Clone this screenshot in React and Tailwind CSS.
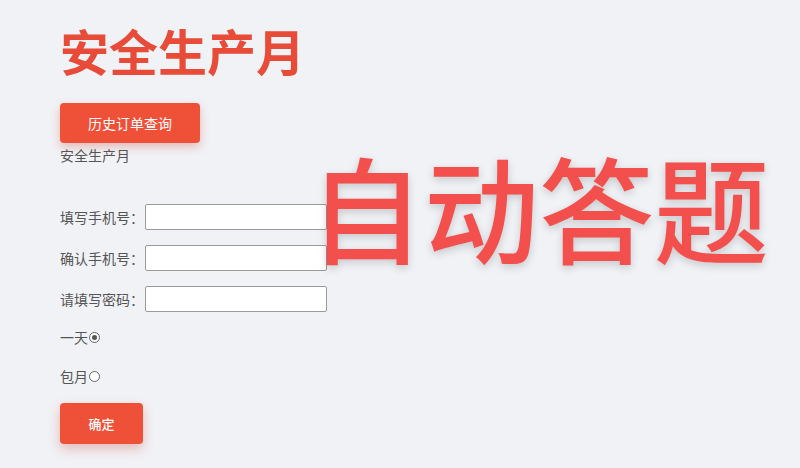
import React, { useState } from 'react';

const font = { fontFamily: '"Noto Sans CJK SC", "Noto Sans", sans-serif' };

const Field = ({ label }) => (
  <div className="flex items-center h-[26px]">
    <span className="w-[85px] text-[14px] text-[#555]">{label}</span>
    <input className="w-[182px] h-[26px] bg-white border border-[#9a9a9a] rounded-[2px] outline-none px-1 text-sm" />
  </div>
);

const Radio = ({ checked }) => (
  <span className="inline-flex items-center justify-center w-[11px] h-[11px] rounded-full border border-[#666] bg-white ml-[1px]">
    {checked && <span className="w-[5px] h-[5px] rounded-full bg-[#555]" />}
  </span>
);

const App = () => {
  const [plan, setPlan] = useState('day');

  return (
    <div className="relative w-[800px] h-[468px] bg-[#f1f2f6] overflow-hidden" style={font}>
      <div className="flex flex-col items-start pl-[60px] pt-[25px]">
        <h1 className="text-[49px] leading-none font-bold text-[#e84c39]">安全生产月</h1>

        <button className="mt-[29px] w-[140px] h-[40px] rounded-[4px] bg-[#ef5038] text-white text-[14px] shadow-[0_4px_10px_rgba(200,60,40,0.3)]">
          历史订单查询
        </button>
        <p className="text-[14px] leading-[20px] text-[#555] mt-[2px]">安全生产月</p>

        <div className="mt-[39px] flex flex-col gap-[15px]">
          <Field label="填写手机号：" />
          <Field label="确认手机号：" />
          <Field label="请填写密码：" />
        </div>

        <label className="mt-[15px] flex items-center h-[20px] text-[14px] text-[#555] cursor-pointer" onClick={() => setPlan('day')}>
          一天<Radio checked={plan === 'day'} />
        </label>
        <label className="mt-[19px] flex items-center h-[20px] text-[14px] text-[#555] cursor-pointer" onClick={() => setPlan('month')}>
          包月<Radio checked={plan === 'month'} />
        </label>

        <button className="mt-[17px] w-[83px] h-[41px] rounded-[4px] bg-[#ef5038] text-white text-[13px] font-medium shadow-[0_5px_12px_rgba(200,60,40,0.3)]">
          确定
        </button>
      </div>

      <div className="absolute left-[309px] top-[148px] text-[115px] leading-none font-medium text-[#f24f4d] [text-shadow:0_3px_8px_rgba(0,0,0,0.18)] whitespace-nowrap">
        自动答题
      </div>
    </div>
  );
};

export default App;
